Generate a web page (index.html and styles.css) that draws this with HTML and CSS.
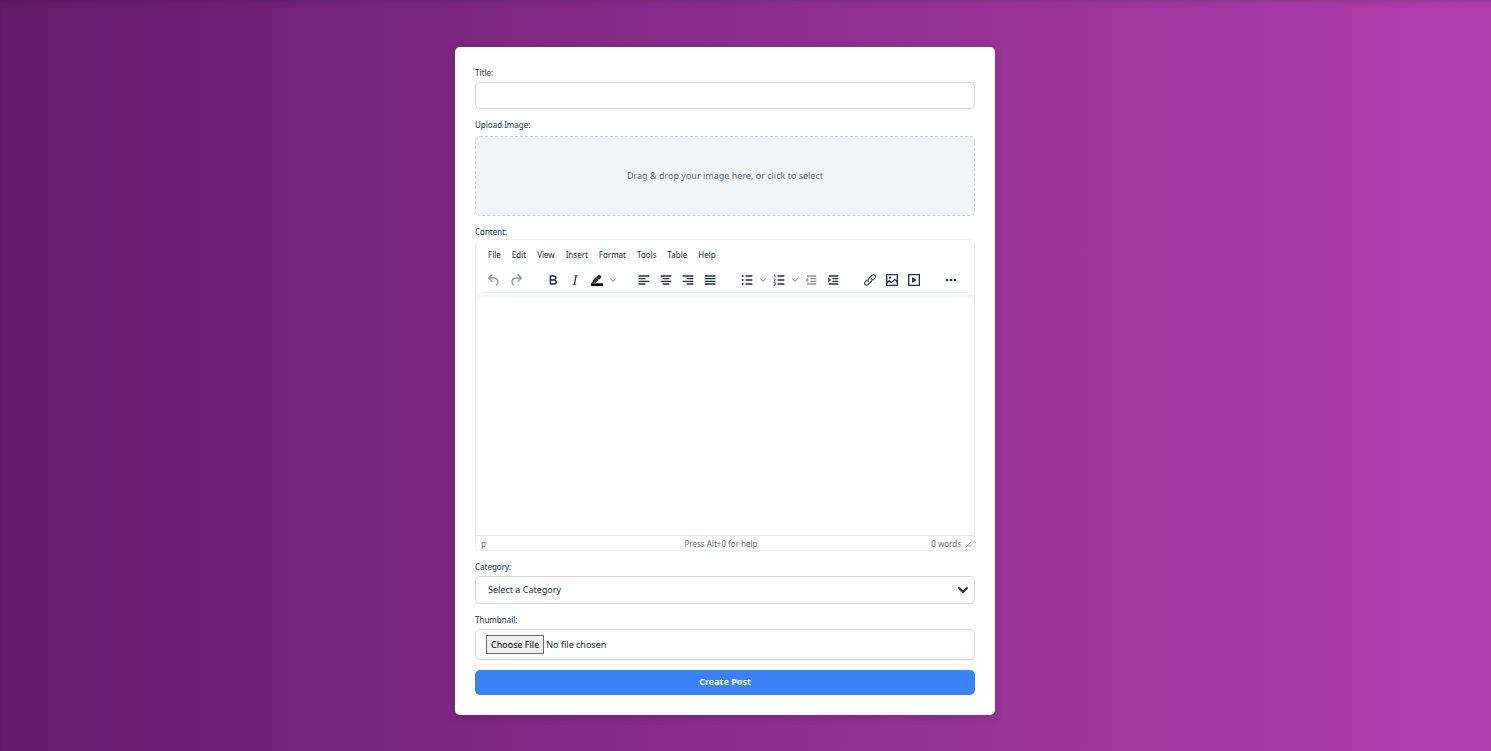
FILE: index.html
```html
<!DOCTYPE html>
<html lang="en">
<head>
    <meta charset="UTF-8">
    <meta name="viewport" content="width=device-width, initial-scale=1.0">
    <title>Create Post</title>
    <link rel="stylesheet" href="styles.css">
</head>
<body>
    <main class="page">
        <form class="post-form">
            <div class="field">
                <label for="title">Title:</label>
                <input type="text" id="title" class="text-input">
            </div>

            <div class="field">
                <label for="image">Upload Image:</label>
                <button type="button" id="image" class="dropzone">Drag &amp; drop your image here, or click to select</button>
            </div>

            <div class="field">
                <label for="content" class="content-label">Content:</label>
                <div class="editor">
                    <div class="editor-header">
                        <div class="menubar">
                            <button type="button">File</button>
                            <button type="button">Edit</button>
                            <button type="button">View</button>
                            <button type="button">Insert</button>
                            <button type="button">Format</button>
                            <button type="button">Tools</button>
                            <button type="button">Table</button>
                            <button type="button">Help</button>
                        </div>
                        <div class="toolbar">
                            <div class="group">
                                <button type="button" class="tool" aria-label="Undo" disabled><svg viewBox="0 0 24 24"><path d="M6.4 8H12c3.7 0 6.2 2 6.8 5.1.6 2.7-.4 5.6-2.3 6.8a1 1 0 0 1-1-1.8c1.1-.6 1.8-2.7 1.4-4.6-.5-2.1-2.1-3.5-4.9-3.5H6.4l3.3 3.3a1 1 0 1 1-1.4 1.4l-5-5a1 1 0 0 1 0-1.4l5-5a1 1 0 0 1 1.4 1.4L6.4 8z"/></svg></button>
                                <button type="button" class="tool" aria-label="Redo" disabled><svg viewBox="0 0 24 24"><path d="M17.6 10H12c-2.8 0-4.4 1.4-4.9 3.5-.4 2 .3 4 1.4 4.6a1 1 0 1 1-1 1.8c-2-1.2-2.9-4.1-2.3-6.8.6-3 3-5.1 6.8-5.1h5.6l-3.3-3.3a1 1 0 1 1 1.4-1.4l5 5a1 1 0 0 1 0 1.4l-5 5a1 1 0 0 1-1.4-1.4l3.3-3.3z"/></svg></button>
                            </div>
                            <div class="group">
                                <button type="button" class="tool" aria-label="Bold"><svg viewBox="0 0 24 24"><path d="M7.8 19c-.3 0-.5 0-.6-.2l-.2-.5V5.7c0-.2 0-.4.2-.5l.6-.2h5c1.5 0 2.7.3 3.5 1 .7.6 1.1 1.4 1.1 2.5a3 3 0 0 1-.6 1.9c-.4.6-1 1-1.6 1.2.4.1.9.3 1.3.6s.8.7 1 1.2c.4.4.5 1 .5 1.6 0 1.3-.4 2.3-1.3 3-.8.7-2.1 1-3.8 1H7.8zm5-8.3c.6 0 1.2-.1 1.6-.5.4-.3.6-.7.6-1.3 0-1.1-.8-1.7-2.3-1.7H9.3v3.5h3.5zm.5 6c.7 0 1.3-.1 1.7-.4.4-.4.6-.9.6-1.5s-.2-1-.7-1.4c-.4-.3-1-.4-2-.4H9.3v3.7h4z"/></svg></button>
                                <button type="button" class="tool" aria-label="Italic"><svg viewBox="0 0 24 24"><path d="M16.7 4.7l-.1.9h-.3c-.6 0-1 0-1.4.3-.3.3-.4.6-.5 1.1l-2.1 9.8v.6c0 .5.4.8 1.4.8h.2l-.2.8H8l.2-.8h.2c1.1 0 1.8-.5 2-1.5l2-9.8.1-.5c0-.6-.4-.8-1.4-.8h-.3l.2-.9h5.7z"/></svg></button>
                                <button type="button" class="tool" aria-label="Highlight color"><svg viewBox="0 0 24 24"><path fill="#000" d="M3 17h18v4H3z"/><path d="M7.7 16.7H3l3.3-3.3-.7-.8L10.2 8l4 4.1-4 4.2c-.2.2-.6.2-.8 0l-.6-.7-1.1 1.1zm4-7.5L11 7.4l3-2.9a2 2 0 0 1 2.6 0L18 6c.7.7.7 2 0 2.7l-2.9 2.9-3.4-2.4z"/></svg></button>
                                <button type="button" class="chevron" aria-label="Highlight colors"><svg viewBox="0 0 10 10"><path d="M8.7 2.2c.3-.3.8-.3 1 0 .4.4.4.9 0 1.2L5.7 7.8c-.3.3-.9.3-1.2 0L.2 3.4a.8.8 0 0 1 0-1.2c.3-.3.8-.3 1.1 0L5 6l3.7-3.8z"/></svg></button>
                            </div>
                            <div class="group">
                                <button type="button" class="tool" aria-label="Align left"><svg viewBox="0 0 24 24"><path d="M4 5h16v2H4zM4 9h10v2H4zM4 13h16v2H4zM4 17h10v2H4z"/></svg></button>
                                <button type="button" class="tool" aria-label="Align center"><svg viewBox="0 0 24 24"><path d="M4 5h16v2H4zM7 9h10v2H7zM4 13h16v2H4zM7 17h10v2H7z"/></svg></button>
                                <button type="button" class="tool" aria-label="Align right"><svg viewBox="0 0 24 24"><path d="M4 5h16v2H4zM10 9h10v2H10zM4 13h16v2H4zM10 17h10v2H10z"/></svg></button>
                                <button type="button" class="tool" aria-label="Justify"><svg viewBox="0 0 24 24"><path d="M4 5h16v2H4zM4 9h16v2H4zM4 13h16v2H4zM4 17h16v2H4z"/></svg></button>
                            </div>
                            <div class="group">
                                <button type="button" class="tool" aria-label="Bullet list"><svg viewBox="0 0 24 24"><path d="M10 5h10v2H10zM10 11h10v2H10zM10 17h10v2H10z"/><circle cx="5.5" cy="6" r="1.6"/><circle cx="5.5" cy="12" r="1.6"/><circle cx="5.5" cy="18" r="1.6"/></svg></button>
                                <button type="button" class="chevron" aria-label="Bullet list styles"><svg viewBox="0 0 10 10"><path d="M8.7 2.2c.3-.3.8-.3 1 0 .4.4.4.9 0 1.2L5.7 7.8c-.3.3-.9.3-1.2 0L.2 3.4a.8.8 0 0 1 0-1.2c.3-.3.8-.3 1.1 0L5 6l3.7-3.8z"/></svg></button>
                                <button type="button" class="tool" aria-label="Numbered list"><svg viewBox="0 0 24 24"><path d="M10 5h10v2H10zM10 11h10v2H10zM10 17h10v2H10z"/><path class="line thin" d="M4.5 4.5H6v4M4 10.5h2.5v1.3L4.4 13.6H7M4 16h2.5v4H4M4.5 18h2"/></svg></button>
                                <button type="button" class="chevron" aria-label="Numbered list styles"><svg viewBox="0 0 10 10"><path d="M8.7 2.2c.3-.3.8-.3 1 0 .4.4.4.9 0 1.2L5.7 7.8c-.3.3-.9.3-1.2 0L.2 3.4a.8.8 0 0 1 0-1.2c.3-.3.8-.3 1.1 0L5 6l3.7-3.8z"/></svg></button>
                                <button type="button" class="tool" aria-label="Decrease indent" disabled><svg viewBox="0 0 24 24"><path d="M6 5h14v2H6zM11 9h9v2h-9zM11 13h9v2h-9zM6 17h14v2H6z"/><path class="line" d="M8 9.5L5 12l3 2.5"/></svg></button>
                                <button type="button" class="tool" aria-label="Increase indent"><svg viewBox="0 0 24 24"><path d="M6 5h14v2H6zM11 9h9v2h-9zM11 13h9v2h-9zM6 17h14v2H6z"/><path class="line" d="M4.5 9.5l3 2.5-3 2.5"/></svg></button>
                            </div>
                            <div class="group">
                                <button type="button" class="tool" aria-label="Link"><svg viewBox="0 0 24 24"><path class="line medium" d="M10 14.5a3 3 0 0 1 0-4.6l5-5a3 3 0 0 1 4.3 4.3l-3 3M14 9.5a3 3 0 0 1 0 4.6l-5 5a3 3 0 0 1-4.3-4.3l3-3"/></svg></button>
                                <button type="button" class="tool" aria-label="Image"><svg viewBox="0 0 24 24"><path class="line" d="M4 4h16v16H4zM4 17l4-4 3 3 5-5 4 4"/><circle cx="9" cy="8.5" r="1.7"/></svg></button>
                                <button type="button" class="tool" aria-label="Media"><svg viewBox="0 0 24 24"><path class="line" d="M4 4h16v16H4z"/><path d="M9 8l7 4-7 4z"/></svg></button>
                            </div>
                            <div class="group">
                                <button type="button" class="tool" aria-label="More"><svg viewBox="0 0 24 24"><circle cx="6" cy="12" r="2"/><circle cx="12" cy="12" r="2"/><circle cx="18" cy="12" r="2"/></svg></button>
                            </div>
                        </div>
                    </div>
                    <textarea id="content" class="editor-area"></textarea>
                    <div class="statusbar">
                        <span>p</span>
                        <span>Press Alt+0 for help</span>
                        <span class="word-count">0 words</span>
                        <svg viewBox="0 0 8 8"><path d="M1 7l6-6M4 7l3-3"/></svg>
                    </div>
                </div>
            </div>

            <div class="field">
                <label for="category">Category:</label>
                <div class="select-wrap">
                    <select id="category">
                        <option>Select a Category</option>
                    </select>
                    <svg class="select-arrow" viewBox="0 0 12 8"><path d="M2 2l4 4 4-4"/></svg>
                </div>
            </div>

            <div class="field">
                <label for="thumbnail">Thumbnail:</label>
                <input type="file" id="thumbnail" class="file-input">
            </div>

            <button type="submit" class="submit-btn">Create Post</button>
        </form>
    </main>
</body>
</html>
```
FILE: styles.css
```css
* {
    box-sizing: border-box;
}

body {
    margin: 0;
    font-family: "Noto Sans", "Open Sans", sans-serif;
    font-size: 9px;
    color: #222f3e;
}

button, input, select, textarea {
    font-family: inherit;
    font-size: inherit;
    color: inherit;
}

.page {
    min-height: 100vh;
    padding: 47px 41px 36px 0;
    background: linear-gradient(to right, #631c6b, #b340af);
    box-shadow: inset 0 6px 6px -4px rgba(0, 0, 0, 0.15);
}

/* Card */
.post-form {
    max-width: 540px;
    margin: 0 auto;
    padding: 20px;
    background-color: #fff;
    border-radius: 5px;
    box-shadow: 0 2px 8px rgba(0, 0, 0, 0.15);
}

.field {
    margin-bottom: 10px;
}

.field label {
    display: block;
    margin-bottom: 3px;
    font-size: 8px;
    line-height: 12px;
}

.field .content-label {
    margin-bottom: 1px;
}

.text-input, .file-input, .select-wrap select {
    display: block;
    width: 100%;
    background-color: #fff;
    border: 1px solid #d1d5db;
    border-radius: 5px;
}

.text-input {
    height: 27px;
    padding: 4px 12px;
}

.dropzone {
    display: block;
    width: 100%;
    height: 80px;
    margin-top: 5px;
    padding: 0 0 2px;
    background-color: #f3f4f6;
    border: 1px dashed #d1d5db;
    border-radius: 5px;
    color: #6b7280;
}

/* Editor */
.editor {
    border: 1px solid #eee;
    border-radius: 5px;
    overflow: hidden;
}

.editor-header {
    position: relative;
    padding: 4px 7px 2px;
    box-shadow: 0 2px 3px rgba(34, 47, 62, 0.07);
}

.editor button {
    padding: 0;
    border: none;
    background: none;
}

.menubar {
    display: flex;
    gap: 1px;
    height: 23px;
}

.editor .menubar button {
    padding: 0 5px 2px;
    font-size: 8px;
}

.toolbar {
    display: flex;
    gap: 15px;
    height: 26px;
    border-bottom: 1px solid #e3e6ea;
}

.group {
    display: flex;
    align-items: center;
}

.tool {
    width: 22px;
    height: 22px;
}

.tool svg {
    display: block;
    width: 16px;
    height: 16px;
    margin: 0 auto;
    fill: #222f3e;
    stroke: none;
}

.tool .line {
    fill: none;
    stroke: #222f3e;
    stroke-width: 2;
}

.tool .medium {
    stroke-width: 1.6;
}

.tool .thin {
    stroke-width: 1;
}

.tool:disabled svg {
    opacity: 0.5;
}

.chevron {
    width: 10px;
}

.chevron svg {
    display: block;
    width: 6px;
    height: 6px;
    margin: 0 auto;
    fill: #8b929b;
}

.editor-area {
    display: block;
    width: 100%;
    height: 240px;
    padding: 10px;
    border: none;
    resize: none;
}

.statusbar {
    display: grid;
    grid-template-columns: 1fr auto 1fr 11px;
    align-items: center;
    height: 15px;
    padding: 0 2px 0 5px;
    border-top: 1px solid #e3e6ea;
    font-size: 8px;
    color: #6b727c;
}

.word-count {
    text-align: right;
}

.statusbar svg {
    width: 7px;
    height: 7px;
    margin: 2px 0 0 4px;
    fill: none;
    stroke: #7c838c;
}

/* Category */
.select-wrap {
    position: relative;
}

.select-wrap select {
    height: 28px;
    padding: 0 30px 2px 12px;
    appearance: none;
}

.select-arrow {
    position: absolute;
    top: 10px;
    right: 6px;
    width: 12px;
    height: 8px;
    fill: none;
    stroke: #1f2937;
    stroke-width: 2;
    stroke-linecap: round;
    pointer-events: none;
}

.file-input {
    height: 31px;
    padding: 5px 10px;
}

.file-input::file-selector-button {
    height: 19px;
    margin: 0 2px 0 0;
    padding: 0 4px 1px;
    border: 1px solid #6b6b6b;
    background-color: #efefef;
    font: inherit;
    color: #000;
}

.submit-btn {
    display: block;
    width: 100%;
    height: 25px;
    padding: 0 0 2px;
    border: none;
    border-radius: 5px;
    background-color: #3b82f6;
    color: #fff;
    font-weight: bold;
}
```
